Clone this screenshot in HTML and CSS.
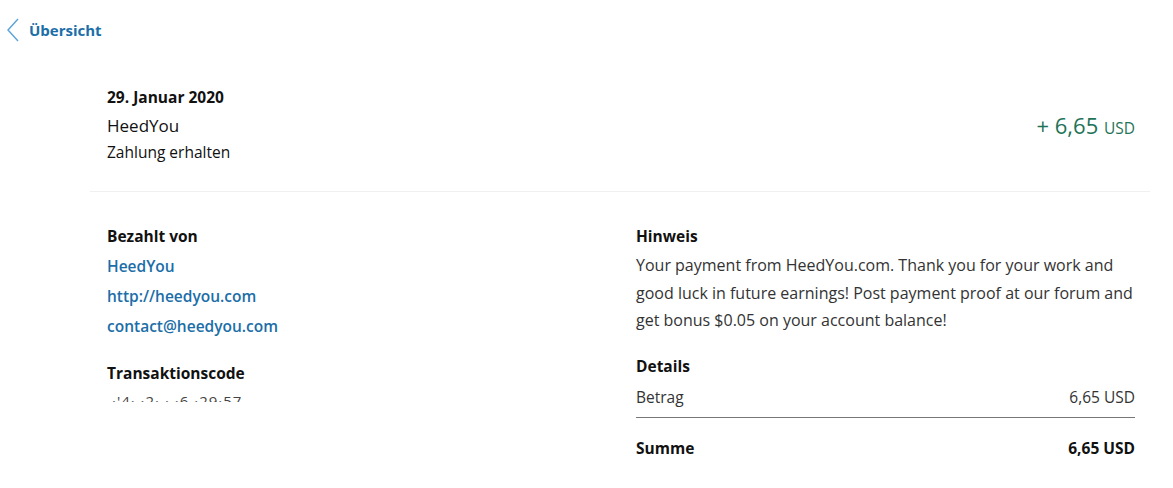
FILE: index.html
```html
<!DOCTYPE html>
<html lang="de">
<head>
    <meta charset="UTF-8">
    <title>Zahlung erhalten</title>
    <link rel="stylesheet" href="styles.css">
</head>
<body>
    <a class="back-link" href="#">
        <svg class="back-icon" width="14" height="24" viewBox="0 0 14 24"><path d="M12 1 L2 12 L12 23" fill="none" stroke="#5aa3d9" stroke-width="1.4"/></svg>
        Übersicht
    </a>

    <div class="activity">
        <div class="summary">
            <div class="summary-info">
                <div class="date">29. Januar 2020</div>
                <div class="name">HeedYou</div>
                <div class="type">Zahlung erhalten</div>
            </div>
            <div class="amount">+ 6,65 <span class="currency">USD</span></div>
        </div>

        <div class="details">
            <div class="col">
                <div class="heading">Bezahlt von</div>
                <a class="contact" href="#">HeedYou</a>
                <a class="contact" href="#">http://heedyou.com</a>
                <a class="contact" href="#">contact@heedyou.com</a>

                <div class="heading code-heading">Transaktionscode</div>
                <div class="code">.·'4·  ·2·  ·  ·6  ·29·57</div>
            </div>
            <div class="col">
                <div class="heading">Hinweis</div>
                <p class="note">Your payment from HeedYou.com. Thank you for your work and good luck in future earnings! Post payment proof at our forum and get bonus $0.05 on your account balance!</p>

                <div class="heading">Details</div>
                <div class="row">
                    <span>Betrag</span>
                    <span>6,65 USD</span>
                </div>
                <div class="row total">
                    <span>Summe</span>
                    <span>6,65 USD</span>
                </div>
            </div>
        </div>
    </div>
</body>
</html>
```

FILE: styles.css
```css
body {
    margin: 0;
    font-family: "Open Sans", "Noto Sans", sans-serif;
    color: #2c2e2f;
    background-color: #fff;
}

a {
    text-decoration: none;
}

.back-link {
    display: flex;
    align-items: center;
    gap: 9px;
    padding: 18px 0 0 6px;
    font-size: 15px;
    font-weight: 700;
    color: #1b6ea8;
}

.activity {
    margin: 44px 23px 0 90px;
}

.summary {
    display: flex;
    justify-content: space-between;
    align-items: center;
    padding: 0 15px 28px 17px;
    border-bottom: 1px solid #f0f0f0;
}

.date {
    font-size: 15.5px;
    font-weight: 700;
    color: #111;
}

.name {
    margin-top: 6px;
    font-size: 17px;
    color: #111;
}

.type {
    margin-top: 4px;
    font-size: 15.5px;
    color: #111;
}

.amount {
    font-size: 22px;
    color: #1e7358;
}

.amount .currency {
    font-size: 15.5px;
}

.details {
    display: grid;
    grid-template-columns: 1fr 1fr;
    gap: 30px;
    padding: 34px 15px 0 17px;
}

.heading {
    font-size: 15.5px;
    font-weight: 700;
    color: #111;
    line-height: 20px;
    margin-bottom: 10px;
}

.contact {
    display: block;
    font-size: 15.5px;
    font-weight: 600;
    color: #1b6ea8;
    line-height: 20px;
    margin-bottom: 10px;
}

.code-heading {
    margin-top: 27px;
    margin-bottom: 8px;
}

.code {
    font-size: 15px;
    color: #444;
    letter-spacing: 1px;
    clip-path: inset(0 0 45% 0);
}

.note {
    margin: -4px 0 21px;
    font-size: 16px;
    line-height: 27.5px;
    color: #333;
}

.row {
    display: flex;
    justify-content: space-between;
    font-size: 15.5px;
    color: #333;
    padding: 0 0 9px;
    border-bottom: 1px solid #777;
}

.row.total {
    font-weight: 700;
    color: #111;
    border-bottom: none;
    padding-top: 19px;
}
```
